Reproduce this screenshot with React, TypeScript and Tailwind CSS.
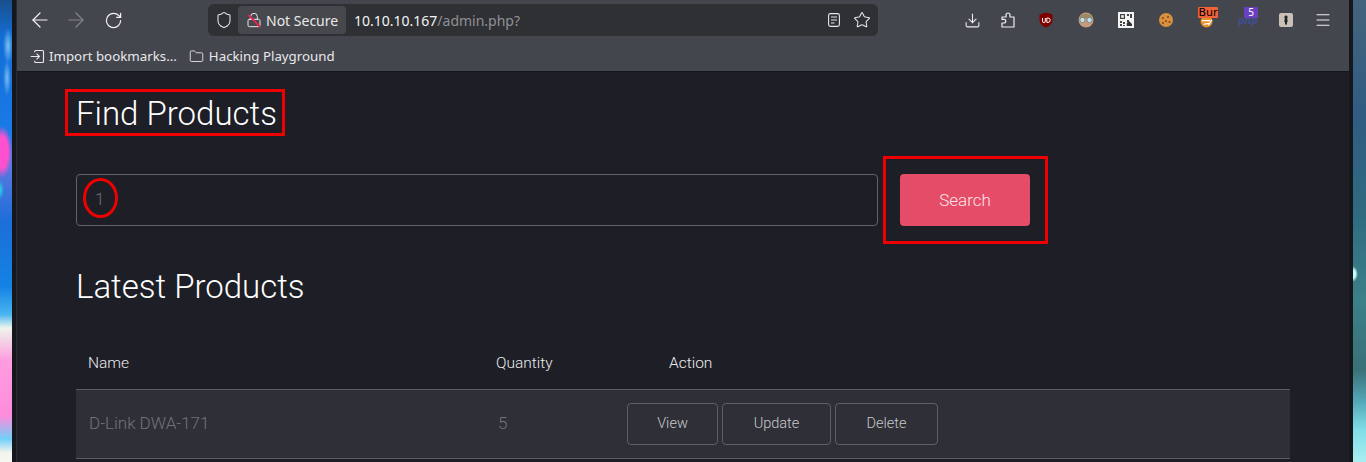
import { ArrowLeft, ArrowRight, RotateCw, Shield, Lock, Star, Download, Menu, Folder } from "lucide-react";

const ui = "font-['Noto_Sans',sans-serif]";
const page = "font-['Roboto',sans-serif]";

function OutlineButton({ label, className }: { label: string; className: string }) {
  return (
    <button className={`flex h-[42px] items-center justify-center rounded border border-[#5f6064] text-[14.5px] font-light text-[#c9c9cc] ${className}`}>
      {label}
    </button>
  );
}

function Toolbar() {
  return (
    <div className={`flex h-9 items-center pt-1 ${ui}`}>
      <div className="flex w-[191px] items-center pl-[11px] text-[#f3f3f4]">
        <ArrowLeft size={24} strokeWidth={1.2} />
        <ArrowRight size={24} strokeWidth={1.2} className="ml-[12px] text-[#85868b]" />
        <RotateCw size={19} strokeWidth={1.5} className="ml-[16px]" />
      </div>
      <div className="flex h-8 w-[670px] items-center rounded-md bg-[#2f3034] pl-[7px] text-[14px]">
        <Shield size={18} strokeWidth={1.4} className="text-[#e6e6e8]" />
        <div className="ml-[5px] flex h-7 w-[108px] items-center rounded bg-[#47484d] pl-[8px] text-[#e8e8ea]">
          <span className="relative">
            <Lock size={16} strokeWidth={1.5} />
            <span className="absolute left-0 top-[8px] h-[1.5px] w-[17px] rotate-45 bg-[#e22850]" />
          </span>
          <span className="ml-[4px] whitespace-nowrap">Not Secure</span>
        </div>
        <span className="ml-[8px] text-[#f4f4f5]">10.10.10.167</span>
        <span className="text-[#8f9094]">/admin.php?</span>
        <svg viewBox="0 0 12 14" className="ml-auto h-[14px] w-3 text-[#e6e6e8]" fill="none" stroke="currentColor" strokeWidth="1.1">
          <rect x=".6" y=".6" width="10.8" height="12.8" rx="1.8" />
          <path d="M3 4h6M3 7h6M3 10h3.5" />
        </svg>
        <Star size={18} strokeWidth={1.4} className="ml-[13px] mr-[7px] text-[#e6e6e8]" />
      </div>
      <div className="ml-[86px] flex items-center text-[#f0f0f2]">
        <Download size={17} strokeWidth={1.5} />
        <svg viewBox="0 0 14 16" className="ml-[20px] h-4 w-[14px]" fill="none" stroke="currentColor" strokeWidth="1.2" strokeLinejoin="round">
          <path d="M1 15V11h2a1.8 1.8 0 0 0 0-3.6H1V5h4V3a2 2 0 0 1 4 0V5h4V15Z" />
        </svg>
        <svg viewBox="0 0 16 16" className="ml-[23px] h-4 w-4">
          <path d="M8 .5 14.5 2.5V8c0 3.6-3 6-6.5 7.5C4.5 14 1.5 11.6 1.5 8V2.5Z" fill="#800000" />
          <path d="M4.5 6v3.2a1.4 1.4 0 0 0 2.8 0V6M8.8 6v4.4h1.2a2.2 2.2 0 0 0 0-4.4Z" fill="none" stroke="#fff" strokeWidth="1" />
        </svg>
        <svg viewBox="0 0 16 16" className="ml-[24px] h-4 w-4">
          <circle cx="8" cy="8" r="7.5" fill="#c89a7c" />
          <path d="M2 4.5C4 .8 12 .8 14 4.5V6H2Z" fill="#9c8a63" />
          <circle cx="4.5" cy="8" r="2.6" fill="#bfe3ea" stroke="#6d7c84" strokeWidth=".8" />
          <circle cx="11.5" cy="8" r="2.6" fill="#bfe3ea" stroke="#6d7c84" strokeWidth=".8" />
        </svg>
        <svg viewBox="0 0 16 16" className="ml-[24px] h-4 w-4">
          <rect width="16" height="16" fill="#f4f4f4" />
          <path d="M2 2h5v5H2ZM9 2h2v2H9ZM12 2h2v4h-2ZM2 9h2v2H2ZM5 10h2v2H5ZM2 12h2v2H2ZM5 13h2v1H5ZM9 8h2v2H9Z" fill="#444" />
          <path d="M3.2 3.2h2.6v2.6H3.2Z" fill="#f4f4f4" />
          <path d="M9 14a4 4 0 0 1 2-5l3 3v2Z" fill="#333" />
        </svg>
        <svg viewBox="0 0 16 16" className="ml-[24px] h-4 w-4">
          <circle cx="8" cy="8" r="7" fill="#d98f3e" />
          <circle cx="5" cy="6" r="1" fill="#7a4a1c" />
          <circle cx="10" cy="5" r="1" fill="#7a4a1c" />
          <circle cx="8" cy="9" r="1" fill="#7a4a1c" />
          <circle cx="11.5" cy="10" r="1" fill="#7a4a1c" />
          <circle cx="5" cy="11" r="1" fill="#7a4a1c" />
        </svg>
        <span className="relative ml-[25px] block h-4 w-4">
          <svg viewBox="0 0 16 12" className="absolute left-0 top-[5px] h-[11px] w-[15px]">
            <circle cx="8" cy="5" r="6.5" fill="#e8912c" />
            <path d="M3 4h9M5 8l6-1M10 9l4-6" stroke="#fff" strokeWidth="1.2" />
          </svg>
          <span className="absolute left-[-1px] top-[-5px] h-[11px] w-5 overflow-hidden rounded-[1px] bg-[#f2603a] text-center font-['DejaVu_Sans',sans-serif] text-[11px] leading-[11px] text-black">Bur</span>
        </span>
        <span className="relative ml-[23px] block h-4 w-5">
          <span className="absolute left-0 top-[2px] text-[11px] font-bold italic leading-3 text-[#414f96]">php</span>
          <span className="absolute left-[6px] top-[-5px] h-[11px] w-[14px] rounded-[1px] bg-[#6a3fc0] text-center text-[10px] leading-[11px] text-white">5</span>
        </span>
        <svg viewBox="0 0 14 14" className="ml-[21px] h-[14px] w-[14px]">
          <rect width="14" height="14" rx="2" fill="#c9c0b8" />
          <path d="M7 2.5a1.6 1.6 0 0 1 1.2 2.7L8.7 9H8v2.5H6V9h-.7l.5-3.8A1.6 1.6 0 0 1 7 2.5Z" fill="#222" />
        </svg>
        <Menu size={18} strokeWidth={1.4} className="ml-[21px]" />
      </div>
    </div>
  );
}

function Bookmarks() {
  return (
    <div className={`flex h-[35px] items-center pl-[13px] pt-[6px] text-[13.3px] text-[#e8e8ea] ${ui}`}>
      <svg viewBox="0 0 16 16" className="h-[15px] w-[15px]" fill="none" stroke="currentColor" strokeWidth="1.2" strokeLinejoin="round">
        <path d="M5 3.5V2.6A1 1 0 0 1 6 1.6h7.4a1 1 0 0 1 1 1v10.8a1 1 0 0 1-1 1H6a1 1 0 0 1-1-1v-.9" />
        <path d="M.8 8H10M7 5l3 3-3 3" />
      </svg>
      <span className="ml-[4px]">Import bookmarks...</span>
      <Folder size={15} strokeWidth={1.4} className="ml-[12px]" />
      <span className="ml-[5px]">Hacking Playground</span>
    </div>
  );
}

export default function App() {
  return (
    <div className="relative flex h-[462px] w-[1366px] overflow-hidden bg-[#111218]">
      <div className="h-full w-3 shrink-0 bg-[radial-gradient(ellipse_5px_18px_at_8px_46px,#7cc0f0_0%,transparent_100%),radial-gradient(ellipse_4px_18px_at_7px_78px,#78bcf0_0%,transparent_100%),radial-gradient(ellipse_10px_26px_at_2px_152px,#ff50d0_0%,#ff50d0_60%,transparent_100%),radial-gradient(ellipse_4px_10px_at_0px_190px,#20d8e8_0%,transparent_100%),linear-gradient(180deg,#1a4f8c_0%,#126ed6_8%,#1a7ae8_28%,#5a78e0_36%,#1c6ed8_48%,#1482e4_62%,#48b4f0_68%,#eef4ee_71%,#f4d0e4_74%,#ff9ce0_78%,#ff8cdc_90%,#70d0f8_95%,#f4f4ee_98%,#f6f6f0_100%)]" />
      <div className="w-[4px] shrink-0 bg-[#16171d]" />
      <div className="flex w-[1333px] shrink-0 flex-col border-l border-[#2a2b30]">
        <div className="h-[72px] shrink-0 border-b border-[#17181e] bg-[#44464e]">
          <Toolbar />
          <Bookmarks />
        </div>
        <main className={`flex-1 bg-[#1d1e26] pl-[59px] text-white ${page}`}>
          <div className="w-[1214px]">
            <h1 className="ml-[-11px] mt-[17px] h-[47px] w-[220px] border-[3px] border-[#f00000] pl-[8px] text-[33px] font-light leading-[43px]">
              Find Products
            </h1>
            <div className="mt-[20px] flex items-center">
              <div className="flex h-[52px] w-[802px] items-center rounded border border-[#63646a] pl-[18px] text-[17px] font-light text-[#6e6f75]">
                1
              </div>
              <div className="ml-[5px] flex h-[88px] w-[165px] items-center border-[3px] border-[#f00000] pl-[14px]">
                <button className="flex h-[52px] w-[130px] items-center justify-center rounded bg-[#e54c67] pt-[1px] text-[17px] font-light text-[#fbe4e9]">
                  Search
                </button>
              </div>
            </div>
            <h2 className="mt-[19px] text-[33px] font-light leading-[48px]">Latest Products</h2>
            <div className="flex h-[78px] items-end pb-[14px] text-[15.5px] font-light text-[#ececee]">
              <span className="ml-[12px] w-[408px]">Name</span>
              <span className="w-[173px]">Quantity</span>
              <span>Action</span>
            </div>
            <div className="flex h-[70px] items-center border-y border-[#5c5d62] bg-[#2e2f37] font-light text-[#727378]">
              <span className="ml-[13px] w-[409px] text-[17px]">D-Link DWA-171</span>
              <span className="w-[129px] text-[17px]">5</span>
              <OutlineButton label="View" className="w-[91px]" />
              <OutlineButton label="Update" className="ml-[4px] w-[109px]" />
              <OutlineButton label="Delete" className="ml-[4px] w-[103px]" />
            </div>
          </div>
        </main>
      </div>
      <div className="w-[4px] shrink-0 bg-[#16171d]" />
      <div className="h-full w-3 flex-1 bg-[radial-gradient(ellipse_5px_8px_at_0px_274px,#c8fbff_0%,#c8fbff_50%,transparent_100%),linear-gradient(180deg,#44647c_0%,#305c82_25%,#2f6a80_45%,#3c8088_65%,#3a7078_80%,#55a8b8_87%,#80dde8_93%,#a8eef0_100%)]" />
      <span className="absolute left-[83px] top-[178px] h-[40px] w-[35px] rounded-[50%] border-[3px] border-[#f00000]" />
    </div>
  );
}
